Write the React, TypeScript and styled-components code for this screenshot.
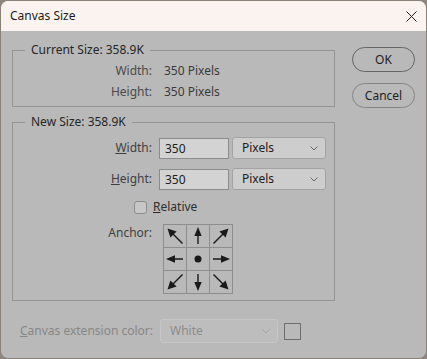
import React from "react";
import styled, { createGlobalStyle } from "styled-components";

const Global = createGlobalStyle`
  html, body { margin: 0; padding: 0; background: #8e867e; }
  body { font-family: "Noto Sans", "Open Sans", sans-serif; font-size: 12px; }
  * { box-sizing: border-box; }
`;

const Window = styled.div`
  width: 427px;
  height: 359px;
  border: 1px solid #8a8178;
  border-radius: 8px;
  overflow: hidden;
  background: #b9b9b9;
  display: flex;
  flex-direction: column;
  color: #2e2e2e;
  line-height: 16px;
`;

const TitleBar = styled.div`
  height: 30px;
  flex: none;
  background: #faf3ef;
  display: flex;
  align-items: center;
  justify-content: space-between;
  padding: 0 9px 0 9px;
  font-size: 12px;
  color: #1c1c1c;
`;

const CloseIcon = styled.svg`
  width: 11px;
  height: 11px;
  margin-top: 1px;
`;

const Body = styled.div`
  flex: 1;
  display: flex;
  padding-left: 11px;
`;

const Main = styled.div`
  width: 323px;
  display: flex;
  flex-direction: column;
`;

const Group = styled.fieldset<{ $top: number; $padTop: number; $padBottom: number }>`
  margin: ${(p) => p.$top}px 0 0 0;
  padding: ${(p) => p.$padTop}px 0 ${(p) => p.$padBottom}px 0;
  border: 1px solid #959595;
  min-inline-size: 0;
`;

const Legend = styled.legend`
  margin-left: 12px;
  padding: 0 6px;
  font-size: 12px;
  line-height: 16px;
  color: #262626;
`;

const InfoGrid = styled.div`
  display: grid;
  grid-template-columns: 139px auto;
  column-gap: 12px;
  grid-auto-rows: 21px;
  align-items: center;
`;

const InfoLabel = styled.span`
  text-align: right;
  color: #4a4a4a;
`;

const InfoValue = styled.span`
  color: #3a3a3a;
`;

const Rows = styled.div`
  display: flex;
  flex-direction: column;
  gap: 9px;
`;

const Row = styled.div<{ $indent?: number }>`
  display: flex;
  align-items: center;
  padding-left: ${(p) => p.$indent ?? 0}px;
`;

const FieldLabel = styled.span<{ $width: number; $disabled?: boolean }>`
  width: ${(p) => p.$width}px;
  flex: none;
  text-align: right;
  margin-right: 7px;
  color: ${(p) => (p.$disabled ? "#878787" : "#3f3f3f")};
  white-space: nowrap;
`;

const TextInput = styled.div`
  width: 70px;
  height: 21px;
  border: 1px solid #8c8c8c;
  background: #d3d3d3;
  padding: 1px 0 0 5px;
  line-height: 17px;
  font-size: 12px;
  color: #202020;
`;

const Select = styled.div<{ $width: number; $disabled?: boolean }>`
  width: ${(p) => p.$width}px;
  height: ${(p) => (p.$disabled ? 24 : 22)}px;
  margin-left: ${(p) => (p.$disabled ? 0 : 3)}px;
  border: 1px solid ${(p) => (p.$disabled ? "#c6c6c6" : "#a3a3a3")};
  border-radius: 3px;
  background: ${(p) => (p.$disabled ? "#bdbdbd" : "#cdcdcd")};
  display: flex;
  align-items: center;
  justify-content: space-between;
  padding: 0 7px 0 9px;
  font-size: 12px;
  color: ${(p) => (p.$disabled ? "#8c8c8c" : "#202020")};
`;

const Chevron = styled.svg<{ $disabled?: boolean }>`
  width: 8px;
  height: 5px;
  stroke: ${(p) => (p.$disabled ? "#a4a4a4" : "#6a6a6a")};
  fill: none;
`;

const CheckBox = styled.span`
  width: 13px;
  height: 13px;
  border: 1px solid #8c8c8c;
  border-radius: 3px;
  background: #c7c7c7;
  margin-right: 6px;
`;

const AnchorLabel = styled(FieldLabel)`
  align-self: flex-start;
  margin-top: 1px;
  margin-right: 11px;
`;

const AnchorGrid = styled.div`
  display: grid;
  grid-template-columns: repeat(3, 22px);
  grid-template-rows: repeat(3, 22px);
  gap: 1px;
  padding: 1px;
  background: #8d8d8d;
`;

const AnchorCell = styled.div`
  background: #b9b9b9;
  display: flex;
  align-items: center;
  justify-content: center;
`;

const Footer = styled.div`
  display: flex;
  align-items: center;
  margin-top: 18px;
`;

const Swatch = styled.div`
  width: 17px;
  height: 17px;
  margin-left: 6px;
  border: 1px solid #6e6e6e;
`;

const Buttons = styled.div`
  margin: 16px 0 0 17px;
  display: flex;
  flex-direction: column;
  gap: 11px;
`;

const Button = styled.button<{ $default?: boolean }>`
  width: 63px;
  height: 25px;
  border-radius: 13px;
  border: 1px solid ${(p) => (p.$default ? "#666666" : "#858585")};
  background: #b9b9b9;
  font-family: inherit;
  font-size: 12px;
  color: #1e1e1e;
  padding: 0;
`;

type ArrowKind = "h" | "d";

const Arrow: React.FC<{ kind: ArrowKind; rotate: number }> = ({ kind, rotate }) => (
  <svg width="22" height="22" viewBox="0 0 22 22">
    <g transform={`rotate(${rotate} 11 11)`} fill="#1a1a1a" stroke="#1a1a1a">
      {kind === "h" ? (
        <>
          <line x1="3" y1="11" x2="12" y2="11" strokeWidth="1.4" />
          <polygon points="11,7.3 20,11 11,14.7" stroke="none" />
        </>
      ) : (
        <>
          <line x1="8" y1="8" x2="18.5" y2="18.5" strokeWidth="1.4" />
          <polygon points="3.5,3.5 12.6,6.4 6.4,12.6" stroke="none" />
        </>
      )}
    </g>
  </svg>
);

const anchors: Array<{ kind: ArrowKind | "dot"; rotate: number }> = [
  { kind: "d", rotate: 0 },
  { kind: "h", rotate: -90 },
  { kind: "d", rotate: 90 },
  { kind: "h", rotate: 180 },
  { kind: "dot", rotate: 0 },
  { kind: "h", rotate: 0 },
  { kind: "d", rotate: -90 },
  { kind: "h", rotate: 90 },
  { kind: "d", rotate: 180 },
];

const ChevronIcon: React.FC<{ disabled?: boolean }> = ({ disabled }) => (
  <Chevron $disabled={disabled} viewBox="0 0 8 5">
    <polyline points="0.5,0.5 4,4 7.5,0.5" strokeWidth="1" />
  </Chevron>
);

export default function App() {
  return (
    <>
      <Global />
      <Window>
        <TitleBar>
          <span>Canvas Size</span>
          <CloseIcon viewBox="0 0 11 11">
            <path d="M0.5 0.5 L10.5 10.5 M10.5 0.5 L0.5 10.5" stroke="#222" strokeWidth="1" />
          </CloseIcon>
        </TitleBar>
        <Body>
          <Main>
            <Group $top={11} $padTop={2} $padBottom={4}>
              <Legend>Current Size: 358.9K</Legend>
              <InfoGrid>
                <InfoLabel>Width:</InfoLabel>
                <InfoValue>350 Pixels</InfoValue>
                <InfoLabel>Height:</InfoLabel>
                <InfoValue>350 Pixels</InfoValue>
              </InfoGrid>
            </Group>
            <Group $top={7} $padTop={7} $padBottom={6}>
              <Legend>New Size: 358.9K</Legend>
              <Rows>
                <Row>
                  <FieldLabel $width={139}>
                    <u>W</u>idth:
                  </FieldLabel>
                  <TextInput>350</TextInput>
                  <Select $width={94}>
                    Pixels
                    <ChevronIcon />
                  </Select>
                </Row>
                <Row>
                  <FieldLabel $width={139}>
                    <u>H</u>eight:
                  </FieldLabel>
                  <TextInput>350</TextInput>
                  <Select $width={94}>
                    Pixels
                    <ChevronIcon />
                  </Select>
                </Row>
                <Row $indent={121}>
                  <CheckBox />
                  <span>
                    <u>R</u>elative
                  </span>
                </Row>
                <Row>
                  <AnchorLabel $width={139}>Anchor:</AnchorLabel>
                  <AnchorGrid>
                    {anchors.map((a, i) => (
                      <AnchorCell key={i}>
                        {a.kind === "dot" ? (
                          <svg width="22" height="22" viewBox="0 0 22 22">
                            <circle cx="11" cy="11" r="3.5" fill="#1a1a1a" />
                          </svg>
                        ) : (
                          <Arrow kind={a.kind} rotate={a.rotate} />
                        )}
                      </AnchorCell>
                    ))}
                  </AnchorGrid>
                </Row>
              </Rows>
            </Group>
            <Footer>
              <FieldLabel $width={141} $disabled>
                <u>C</u>anvas extension color:
              </FieldLabel>
              <Select $width={118} $disabled>
                White
                <ChevronIcon disabled />
              </Select>
              <Swatch />
            </Footer>
          </Main>
          <Buttons>
            <Button $default>OK</Button>
            <Button>Cancel</Button>
          </Buttons>
        </Body>
      </Window>
    </>
  );
}
